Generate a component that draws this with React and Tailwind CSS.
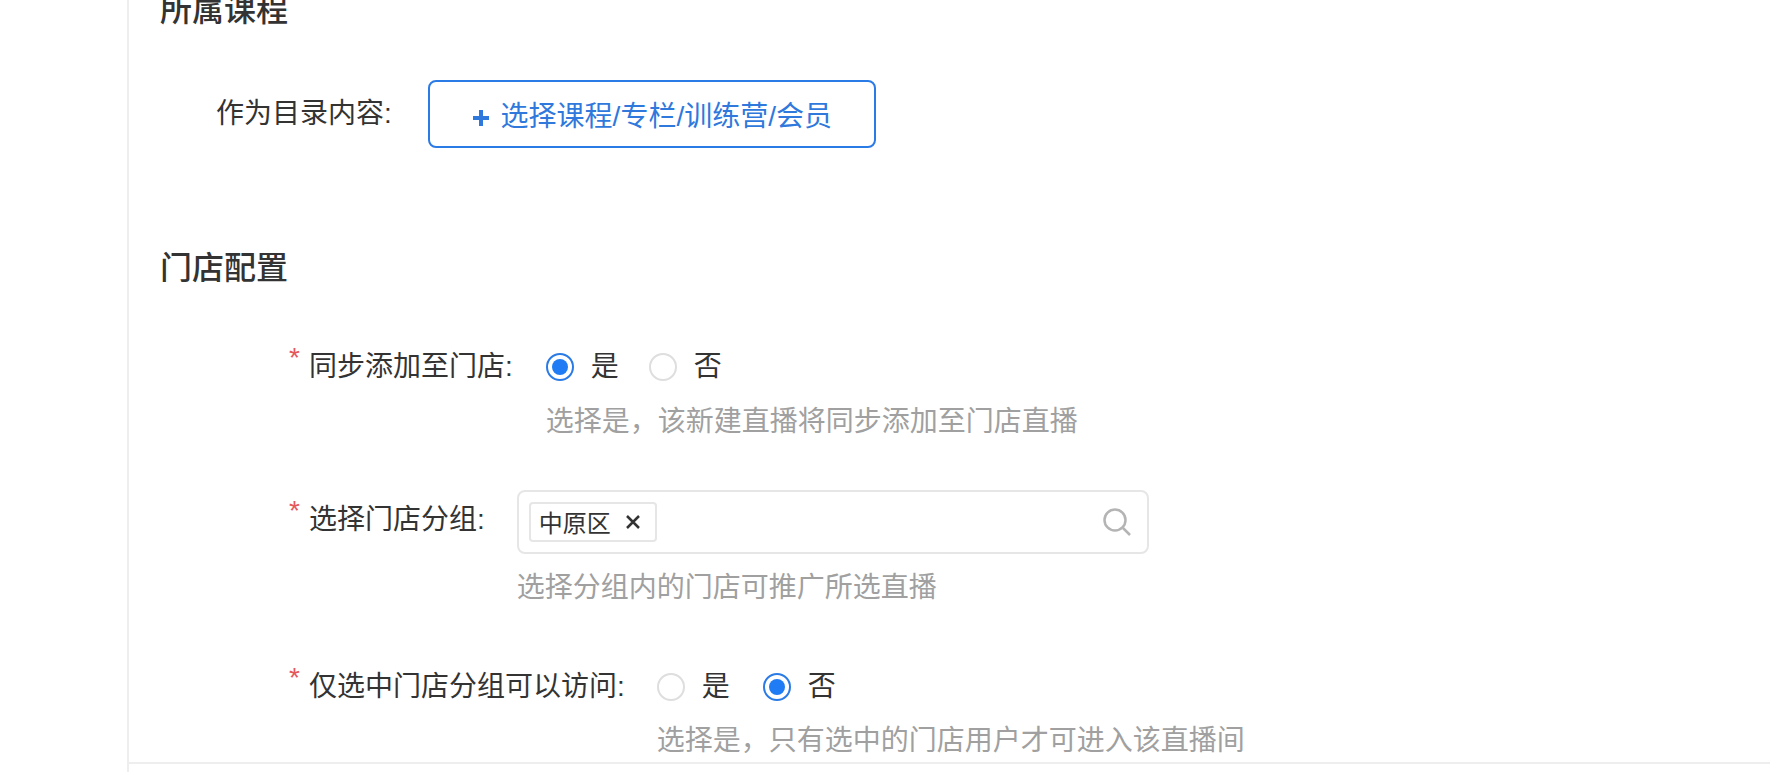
const cjk = "font-['Liberation_Sans','Noto_Sans_CJK_SC',sans-serif]";

function Radio({ checked, label, className = "" }) {
  return (
    <div className={`flex h-[40px] items-center ${className}`}>
      <span
        className={`mt-[3px] flex h-[28px] w-[28px] items-center justify-center rounded-full border-2 bg-white ${
          checked ? "border-[#2b7be6]" : "border-[#dedede]"
        }`}
      >
        {checked && <span className="h-[16px] w-[16px] rounded-full bg-[#1f7cf5]" />}
      </span>
      <span className="ml-[17px] pt-[4px] leading-[36px] text-[#333333]">{label}</span>
    </div>
  );
}

function Label({ children, className = "" }) {
  return (
    <div className={`relative flex shrink-0 pl-[20px] pt-[4px] leading-[36px] text-[#333333] ${className}`}>
      <span className="absolute left-0 top-[-2px] text-[28px] leading-[30px] text-[#e5575b]">*</span>
      {children}
    </div>
  );
}

function Title({ children, className = "" }) {
  return (
    <h2 className={`pt-[4px] text-[32px] leading-[36px] font-medium text-[#333333] ${className}`}>{children}</h2>
  );
}

function Hint({ children, className = "" }) {
  return <p className={`pt-[4px] text-[28px] leading-[36px] text-[#a0a0a0] ${className}`}>{children}</p>;
}

export default function App() {
  return (
    <div className={`flex h-[772px] w-[1770px] overflow-hidden bg-white text-[28px] leading-[40px] ${cjk}`}>
      <div className="w-[127px] shrink-0" />
      <main className="flex min-w-0 flex-1 flex-col border-l-2 border-[#eeeeee]">
        <div className="h-[762px] overflow-hidden pl-[31px]">
          <Title className="mt-[-12px]">所属课程</Title>

          <div className="mt-[52px] flex items-center pl-[56px]">
            <span className="text-[#333333]">作为目录内容:</span>
            <button className="ml-[36px] flex h-[68px] w-[448px] items-center justify-center rounded-[8px] border-2 border-[#2b7be6] text-[#2f78dc]">
              <svg className="mr-[11px] mt-[7px]" width="18" height="18" viewBox="0 0 18 18">
                <path d="M9 1v16M1 9h16" stroke="#2f78dc" strokeWidth="4" fill="none" />
              </svg>
              <span className="pt-[6px]">选择课程/专栏/训练营/会员</span>
            </button>
          </div>

          <Title className="mt-[98px]">门店配置</Title>

          <div className="mt-[59px] flex pl-[129px]">
            <Label>同步添加至门店:</Label>
            <div className="ml-[33px]">
              <div className="flex">
                <Radio checked label="是" />
                <Radio label="否" className="ml-[30px]" />
              </div>
              <Hint className="mt-[15px]">选择是，该新建直播将同步添加至门店直播</Hint>
            </div>
          </div>

          <div className="mt-[50px] flex pl-[129px]">
            <Label className="mt-[8px]">选择门店分组:</Label>
            <div className="ml-[32px]">
              <div className="flex h-[64px] w-[632px] items-center justify-between rounded-[8px] border-2 border-[#e6e6e6] pl-[10px] pr-[16px]">
                <span className="flex h-[40px] w-[128px] items-center rounded-[4px] border-2 border-[#e6e6e6] pl-[8px] text-[24px] text-[#333333]">
                  <span className="pt-[4px]">中原区</span>
                  <svg className="ml-[15px]" width="14" height="14" viewBox="0 0 14 14">
                    <path d="M1 1l12 12M13 1L1 13" stroke="#333333" strokeWidth="2.5" fill="none" />
                  </svg>
                </span>
                <svg width="28" height="28" viewBox="0 0 28 28">
                  <circle cx="12" cy="12" r="10.5" stroke="#b4b4b4" strokeWidth="2.5" fill="none" />
                  <path d="M20 20l7 7" stroke="#b4b4b4" strokeWidth="2.5" fill="none" />
                </svg>
              </div>
              <Hint className="mt-[12px]">选择分组内的门店可推广所选直播</Hint>
            </div>
          </div>

          <div className="mt-[59px] flex pl-[129px]">
            <Label>仅选中门店分组可以访问:</Label>
            <div className="ml-[32px]">
              <div className="flex">
                <Radio label="是" />
                <Radio checked label="否" className="ml-[33px]" />
              </div>
              <Hint className="mt-[14px]">选择是，只有选中的门店用户才可进入该直播间</Hint>
            </div>
          </div>
        </div>
        <div className="h-[2px] w-full bg-[#eeeeee]" />
      </main>
    </div>
  );
}
